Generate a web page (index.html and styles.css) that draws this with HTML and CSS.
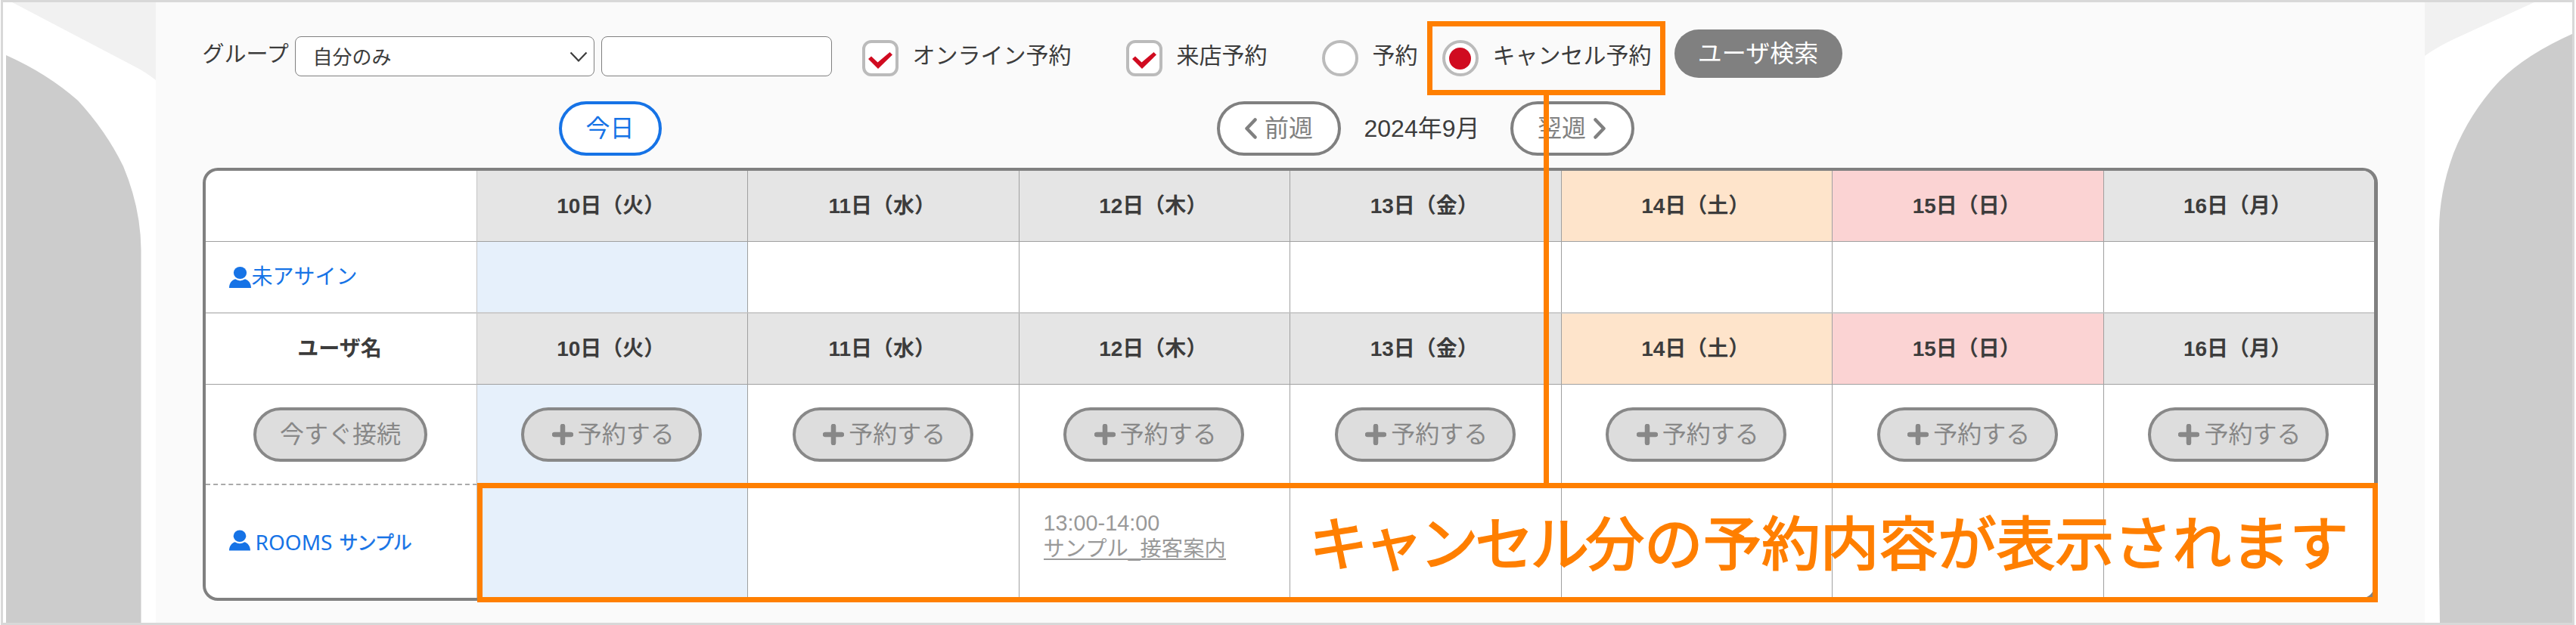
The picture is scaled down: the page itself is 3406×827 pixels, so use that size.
FILE: index.html
```html
<!DOCTYPE html>
<html lang="ja">
<head>
<meta charset="utf-8">
<title>予約カレンダー</title>
<link rel="stylesheet" href="styles.css">
</head>
<body>
<svg width="0" height="0" class="defs" aria-hidden="true">
  <symbol id="user" viewBox="0 0 29 28"><ellipse cx="14.5" cy="8" rx="8.6" ry="8"/><path d="M0 28C0 22 3.500 17.600 8 16.300Q14.500 20.500 21 16.300C25.500 17.600 29 22 29 28Z"/></symbol>
  <symbol id="plus" viewBox="0 0 28 28"><path d="M14 3V25M3 14H25" fill="none" stroke="currentColor" stroke-width="6.500" stroke-linecap="round"/></symbol>
  <symbol id="check" viewBox="0 0 32 22"><path d="M0 9L4 5.500L12.500 13.500L28.500 0L32 3.500L13 22Z"/></symbol>
</svg>
<div class="frame">
  <svg class="backdrop" viewBox="0 0 3406 827" aria-hidden="true">
    <path fill="#f1f1f1" d="M16 3L178 88Q192 95 206 106V3ZM3206 3H3351L3244 52Q3221 63 3206 74Z"/>
    <path fill="#ccc" d="M8 73Q62 97 103 133Q140 173 163 220Q186 275 186.500 330V827H8ZM3403 44Q3340 72 3305 107Q3265 150 3244 203Q3225 255 3225 305V740L3226 827H3403Z"/>
  </svg>
  <main class="panel">
    <div class="toolbar">
      <span class="group-label">グループ</span>
      <div class="select">自分のみ<svg width="24" height="15" viewBox="0 0 24 15"><path d="M1.500 1.500L12 12.500L22.500 1.500" fill="none" stroke="#3c3c3c" stroke-width="2.200"/></svg></div>
      <div class="input"></div>
      <span class="box c1"><svg width="32" height="22"><use href="#check"/></svg></span>
      <span class="label">オンライン予約</span>
      <span class="box c2"><svg width="32" height="22"><use href="#check"/></svg></span>
      <span class="label">来店予約</span>
      <span class="box radio r1"></span>
      <span class="label">予約</span>
      <span class="box radio r2"><i class="dot"></i></span>
      <span class="label">キャンセル予約</span>
      <button class="search">ユーザ検索</button>
    </div>
    <div class="weekbar">
      <button class="pill today">今日</button>
      <button class="pill prev"><svg width="17" height="28" viewBox="0 0 17 28"><path d="M14.500 2.500L3.500 14L14.500 25.500" fill="none" stroke="currentColor" stroke-width="4.500" stroke-linecap="round" stroke-linejoin="round"/></svg>前週</button>
      <span class="month">2024年9月</span>
      <button class="pill next">翌週<svg width="17" height="28" viewBox="0 0 17 28"><path d="M2.500 2.500L13.500 14L2.500 25.500" fill="none" stroke="currentColor" stroke-width="4.500" stroke-linecap="round" stroke-linejoin="round"/></svg></button>
    </div>
    <div class="calendar">
      <div></div><div class="day">10日（火）</div><div class="day">11日（水）</div><div class="day">12日（木）</div><div class="day">13日（金）</div><div class="day sat">14日（土）</div><div class="day sun">15日（日）</div><div class="day">16日（月）</div>
      <div class="user"><svg width="29" height="28"><use href="#user"/></svg><span>未アサイン</span></div><div class="now"></div><div></div><div></div><div></div><div></div><div></div><div></div>
      <div class="day name">ユーザ名</div><div class="day two">10日（火）</div><div class="day two">11日（水）</div><div class="day two">12日（木）</div><div class="day two">13日（金）</div><div class="day two sat">14日（土）</div><div class="day two sun">15日（日）</div><div class="day two">16日（月）</div>
      <div class="act"><button class="pill off connect">今すぐ接続</button></div>
      <div class="act now"><button class="pill off"><svg width="28" height="28"><use href="#plus"/></svg>予約する</button></div>
      <div class="act"><button class="pill off"><svg width="28" height="28"><use href="#plus"/></svg>予約する</button></div>
      <div class="act"><button class="pill off"><svg width="28" height="28"><use href="#plus"/></svg>予約する</button></div>
      <div class="act"><button class="pill off"><svg width="28" height="28"><use href="#plus"/></svg>予約する</button></div>
      <div class="act"><button class="pill off"><svg width="28" height="28"><use href="#plus"/></svg>予約する</button></div>
      <div class="act"><button class="pill off"><svg width="28" height="28"><use href="#plus"/></svg>予約する</button></div>
      <div class="act"><button class="pill off"><svg width="28" height="28"><use href="#plus"/></svg>予約する</button></div>
      <div class="user rooms"><svg width="28" height="28"><use href="#user"/></svg><span class="latin">ROOMS</span><span class="kana">サンプル</span></div>
      <div class="now"></div><div></div>
      <div class="booking"><span class="time">13:00-14:00</span><a class="title">サンプル_接客案内</a></div>
      <div></div><div></div><div></div><div></div>
    </div>
  </main>
  <div class="mark mark-option"></div>
  <div class="connector"></div>
  <div class="mark mark-row"><span class="kata">キャンセル</span>分の予約内容が表示されます</div>
</div>
</body>
</html>
```
FILE: styles.css
```css
* { box-sizing: border-box; }
body { margin: 0; font-family: "Liberation Sans", "Noto Sans CJK JP", sans-serif; color: #3c3c3c; }
button { font-family: inherit; margin: 0; padding: 0; }
svg { display: block; flex: none; fill: currentColor; }
.defs { position: absolute; }
.frame { position: relative; width: 3406px; height: 827px; overflow: hidden; background: #fff; display: flex; justify-content: center; white-space: nowrap; }
.frame::after { content: ""; position: absolute; inset: 0 2px 0 1px; border: 3px solid #d8d8d8; }
.backdrop { position: absolute; left: 0; top: 0; width: 3406px; height: 827px; }
.panel { position: relative; width: 3000px; margin-left: 5px; background: #fafafa; padding: 0 62px; }

.toolbar { display: flex; align-items: flex-start; height: 134px; padding-top: 39px; }
.group-label { width: 122px; margin-top: 13px; font-size: 29px; line-height: 40px; }
.select, .input { margin-top: 9px; height: 53px; border: 1.500px solid #808080; border-radius: 8px; background: #fff; }
.select { width: 396px; padding: 2px 8px 0 23px; display: flex; align-items: center; justify-content: space-between; font-size: 26px; line-height: 40px; }
.input { width: 305px; margin-left: 9px; }
.box { width: 48px; height: 48px; margin-top: 14px; border: 4px solid #bbb; border-radius: 12px; background: #fff; display: flex; align-items: center; justify-content: center; color: #d00b20; }
.box svg { margin-top: 6px; }
.radio { border-radius: 50%; }
.dot { width: 29px; height: 29px; border-radius: 50%; background: #d00b20; }
.label { margin: 15px 0 0 19px; font-size: 30px; line-height: 40px; }
.c1 { margin-left: 40px; }
.c2 { margin-left: 72px; }
.r1 { margin-left: 72px; }
.r2 { margin-left: 32px; }
.search { width: 222px; height: 64px; margin-left: 30px; border: 0; border-radius: 32px; background: #808080; color: #fff; font-size: 32px; line-height: 64px; }

.weekbar { display: flex; align-items: center; height: 88px; padding-bottom: 16px; }
.pill { height: 72px; border: 4px solid #808080; border-radius: 36px; background: #fff; color: #808080; font-size: 32px; line-height: 64px; display: flex; align-items: center; justify-content: center; }
.today { width: 136px; margin-left: 471px; border-color: #1673e6; color: #1673e6; }
.prev { width: 164px; margin-left: 734px; gap: 10px; }
.month { width: 153px; margin-left: 31px; font-size: 32px; line-height: 40px; }
.next { width: 164px; margin-left: 40px; gap: 10px; }

.calendar { width: 2876px; height: 573px; border: 4px solid #808080; border-right-width: 5px; border-radius: 20px; background: #fff; overflow: hidden; display: grid; grid-template-columns: 359px repeat(5, 358.500px) 358.500px 1fr; grid-template-rows: 94px 94px 95px 133px 1fr; }
.calendar > div { border-right: 1px solid #a0a0a0; border-bottom: 1px solid #a0a0a0; display: flex; align-items: center; justify-content: center; }
.calendar > div:nth-child(8n) { border-right: 0; }
.calendar > div:nth-child(8n+1) { border-right-color: #c4c4c4; }
.calendar > div:nth-child(n+25):nth-child(-n+32) { border-bottom: 2px dashed #aaa; }
.calendar > div:nth-child(n+33) { border-bottom: 0; }
.calendar > div:nth-child(n+9):nth-child(-n+16) { border-bottom-color: #ccc; }
.calendar > div:nth-child(n+17):nth-child(-n+24) { border-top: 1px solid #ccc; }
.calendar .day { padding-right: 3px; background: #e5e5e5; font-weight: bold; font-size: 28px; line-height: 40px; }
.calendar .name { background: #fff; }
.calendar .sat { background: #fee4cb; }
.calendar .sun { background: #fbd3d3; }
.calendar .now { background: #e6f0fb; }
.calendar .act { padding-right: 1px; }
.calendar .user { justify-content: flex-start; padding-left: 31px; color: #1673e6; font-size: 28px; line-height: 40px; }
.user svg { margin-right: 1px; }
.rooms svg { margin-top: -4px; }
.latin { margin-left: 6px; font-family: "Noto Sans", sans-serif; font-size: 28px; }
.kana { margin: 3px 0 0 9px; font-size: 25px; letter-spacing: -1px; -webkit-text-stroke: 0.5px #1673e6; }
.off { width: 239px; padding-left: 4px; background: #ddd; border-color: #888; color: #888; gap: 6px; }
.connect { width: 230px; padding-left: 0; }
.calendar .booking { flex-direction: column; align-items: flex-start; justify-content: flex-start; padding: 33px 0 0 32px; color: #999; }
.time { font-size: 28.800px; line-height: 34px; }
.title { font-size: 28.300px; line-height: 34px; border-bottom: 2px solid #999; height: 32px; }

.mark { position: absolute; border: 7px solid #ff7f00; }
.mark-option { left: 1887px; top: 28px; width: 315px; height: 98px; }
.mark-row { left: 631px; top: 639px; width: 2513px; height: 158px; padding-left: 1093px; color: #ff7f00; font-family: "Noto Sans CJK JP", sans-serif; font-weight: 400; font-size: 77.600px; line-height: 137px; -webkit-text-stroke: 2px #ff7f00; }
.kata { letter-spacing: -4.500px; }
.connector { position: absolute; left: 2041px; top: 126px; width: 7px; height: 513px; background: #ff7f00; }
```
